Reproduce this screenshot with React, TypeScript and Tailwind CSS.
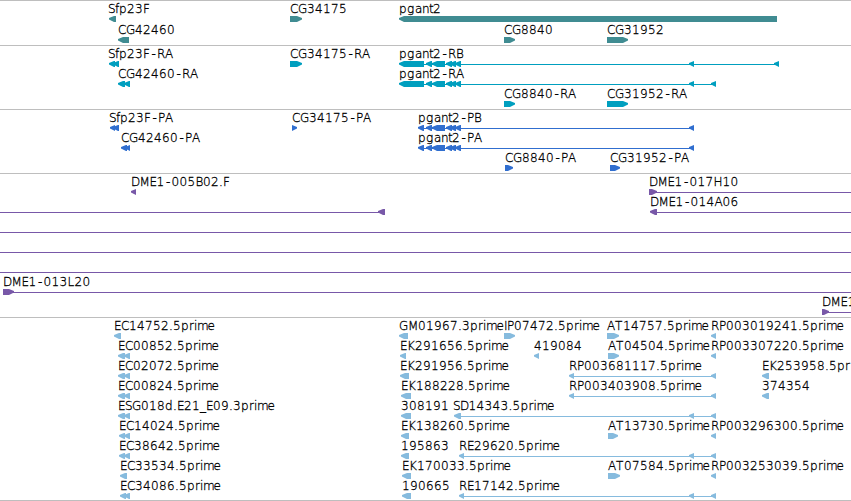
interface Part {
  from: number;
  to: number;
  dir: "left" | "right";
}

interface Feature {
  label?: string;
  at?: number;
  parts: Part[];
  line?: [number, number];
}

interface TrackData {
  name: string;
  className: string;
  color: string;
  rows: Feature[][];
}

// advances for the label font in px, digits are 8
const ADVANCE: Record<string, number> = {
  S: 7, f: 4, p: 8, F: 7, "-": 7, C: 8, G: 9, R: 8, A: 8, P: 7,
  a: 7, n: 7, g: 8, t: 4, B: 7.5, D: 8.5, M: 10, E: 7, H: 9, L: 7,
  d: 8, _: 6, ".": 4, r: 5, i: 3, m: 10.5, e: 7, K: 8, I: 3, T: 8,
};

const WIDTH = 851;

const l = (from: number, to: number): Part => ({ from, to, dir: "left" });
const r = (from: number, to: number): Part => ({ from, to, dir: "right" });
const f = (
  label: string,
  at: number,
  parts: Part[],
  line?: [number, number]
): Feature => ({ label, at, parts, line });
const span = (from: number, to: number): Feature => ({
  parts: [],
  line: [from, to],
});

const exons = [l(426, 432), l(432, 445), l(446, 452), l(450, 456), l(455, 461), l(689, 694)];

const tracks: TrackData[] = [
  {
    name: "genes",
    className: "gap-px pb-[2px]",
    color: "#408c92",
    rows: [
      [
        f("Sfp23F", 108, [l(109, 116)]),
        f("CG34175", 290, [r(290, 302)]),
        f("pgant2", 399, [l(399, 777)]),
      ],
      [
        f("CG42460", 118, [l(118, 129)]),
        f("CG8840", 504, [r(504, 515)]),
        f("CG31952", 607, [r(607, 628)]),
      ],
    ],
  },
  {
    name: "transcripts",
    className: "pb-[2px]",
    color: "#009fbf",
    rows: [
      [
        f("Sfp23F-RA", 108, [l(109, 115), l(113, 119)]),
        f("CG34175-RA", 290, [r(290, 302)]),
        f("pgant2-RB", 399, [l(399, 424), ...exons, l(774, 779)], [424, 779]),
      ],
      [
        f("CG42460-RA", 118, [l(118, 125), l(124, 130)]),
        f("pgant2-RA", 399, [l(399, 424), ...exons, l(711, 716)], [424, 716]),
      ],
      [
        f("CG8840-RA", 504, [r(504, 515)]),
        f("CG31952-RA", 607, [r(607, 628)]),
      ],
    ],
  },
  {
    name: "proteins",
    className: "pb-[2px]",
    color: "#306ecf",
    rows: [
      [
        f("Sfp23F-PA", 109, [l(110, 115), l(113, 119)]),
        f("CG34175-PA", 292, [r(292, 297)]),
        f("pgant2-PB", 418, [l(418, 424), ...exons], [424, 694]),
      ],
      [
        f("CG42460-PA", 121, [l(121, 127), l(125, 130)]),
        f("pgant2-PA", 418, [l(418, 424), ...exons], [424, 694]),
      ],
      [
        f("CG8840-PA", 505, [r(505, 513)]),
        f("CG31952-PA", 610, [r(610, 620)]),
      ],
    ],
  },
  {
    name: "clones",
    className: "pb-[2px]",
    color: "#7858a8",
    rows: [
      [
        f("DME1-005B02.F", 131, [l(131, 136)]),
        f("DME1-017H10", 649, [r(649, 657)], [655, WIDTH]),
      ],
      [
        { parts: [l(378, 385)], line: [0, 385] },
        f("DME1-014A06", 650, [l(650, 657)], [657, WIDTH]),
      ],
      [span(0, WIDTH)],
      [span(0, WIDTH)],
      [span(0, WIDTH)],
      [f("DME1-013L20", 3, [r(3, 14)], [12, WIDTH])],
      [f("DME1", 822, [r(822, 829)], [827, WIDTH])],
    ],
  },
  {
    name: "ests",
    className: "pb-px",
    color: "#86bbde",
    rows: [
      [
        f("EC14752.5prime", 114, [l(114, 121)]),
        f("GM01967.3prime", 399, [l(399, 408)]),
        f("IP07472.5prime", 504, [r(504, 515)]),
        f("AT14757.5prime", 607, [r(607, 619)]),
        f("RP003019241.5prime", 711, [l(711, 716)]),
      ],
      [
        f("EC00852.5prime", 118, [l(118, 125), l(124, 130)]),
        f("EK291656.5prime", 400, [l(400, 406)]),
        f("419084", 534, [l(534, 539)]),
        f("AT04504.5prime", 608, [r(608, 619)]),
        f("RP003307220.5prime", 711, [l(711, 716)]),
      ],
      [
        f("EC02072.5prime", 118, [l(118, 125), l(124, 130)]),
        f("EK291956.5prime", 400, [l(400, 409)]),
        f("RP003681117.5prime", 569, [l(569, 574), l(711, 716)], [574, 716]),
        f("EK253958.5pr", 762, [l(762, 769)]),
      ],
      [
        f("EC00824.5prime", 118, [l(118, 125), l(124, 130)]),
        f("EK188228.5prime", 401, [l(401, 411)]),
        f("RP003403908.5prime", 569, [l(569, 574), l(711, 716)], [574, 716]),
        f("374354", 762, [l(762, 769)]),
      ],
      [
        f("ESG018d.E21_E09.3prime", 118, [l(118, 125), l(124, 130)]),
        f("308191", 401, [l(401, 411)]),
        f("SD14343.5prime", 453, [l(454, 461), l(689, 694), l(711, 716)], [461, 716]),
      ],
      [
        f("EC14024.5prime", 119, [l(119, 125), l(124, 130)]),
        f("EK138260.5prime", 401, [l(401, 409)]),
        f("AT13730.5prime", 608, [r(608, 618)]),
        f("RP003296300.5prime", 711, [l(711, 716)]),
      ],
      [
        f("EC38642.5prime", 119, [l(119, 125), l(124, 130)]),
        f("195863", 401, [l(401, 409)]),
        f("RE29620.5prime", 459, [l(459, 464), l(689, 694), l(711, 716)], [464, 716]),
      ],
      [
        f("EC33534.5prime", 120, [l(120, 127)]),
        f("EK170033.5prime", 402, [l(402, 411)]),
        f("AT07584.5prime", 608, [r(608, 620)]),
        f("RP003253039.5prime", 711, [l(711, 716)]),
      ],
      [
        f("EC34086.5prime", 120, [l(120, 126), l(124, 130)]),
        f("190665", 402, [l(402, 411)]),
        f("RE17142.5prime", 459, [l(459, 464), l(689, 694), l(711, 716)], [464, 716]),
      ],
    ],
  },
];

function glyphPositions(label: string, at: number) {
  let x = at;
  return label
    .split("")
    .map((ch) => {
      // the hyphen is narrower than its cell, so centre it
      const current = ch === "-" ? x + 1.5 : x;
      x += ADVANCE[ch] ?? 8;
      return current;
    })
    .join(" ");
}

function partPoints({ from, to, dir }: Part) {
  const head = Math.min(5, to - from);
  if (dir === "left") {
    return `${from},16 ${from + head},14 ${to},14 ${to},20 ${from + head},20 ${from},17.5`;
  }
  return `${from},14 ${to - head},14 ${to},16 ${to},17.5 ${to - head},20 ${from},20`;
}

function FeatureGlyph({ feature }: { feature: Feature }) {
  const { label, at = 0, parts, line } = feature;
  return (
    <g>
      {line && (
        <rect x={line[0]} y={17} width={line[1] - line[0]} height={1} fill="currentColor" />
      )}
      {parts.map((part, i) => (
        <polygon key={i} points={partPoints(part)} fill="currentColor" />
      ))}
      {label && (
        <text
          x={glyphPositions(label, at)}
          y={11}
          className="fill-black stroke-black stroke-[0.3px]"
        >
          {label}
        </text>
      )}
    </g>
  );
}

function Track({ track }: { track: TrackData }) {
  return (
    <section
      className={`flex flex-col border-t border-[#bebebe] pt-px ${track.className}`}
      style={{ color: track.color }}
    >
      {track.rows.map((row, i) => (
        <svg key={i} width={WIDTH} height={20} className="block shrink-0 overflow-visible">
          {row.map((feature, j) => (
            <FeatureGlyph key={j} feature={feature} />
          ))}
        </svg>
      ))}
    </section>
  );
}

export default function App() {
  return (
    <main className="w-[851px] h-[501px] overflow-hidden bg-white border-b border-[#bebebe] text-[12px] font-extralight font-['DejaVu_Sans',sans-serif]">
      {tracks.map((track) => (
        <Track key={track.name} track={track} />
      ))}
    </main>
  );
}
